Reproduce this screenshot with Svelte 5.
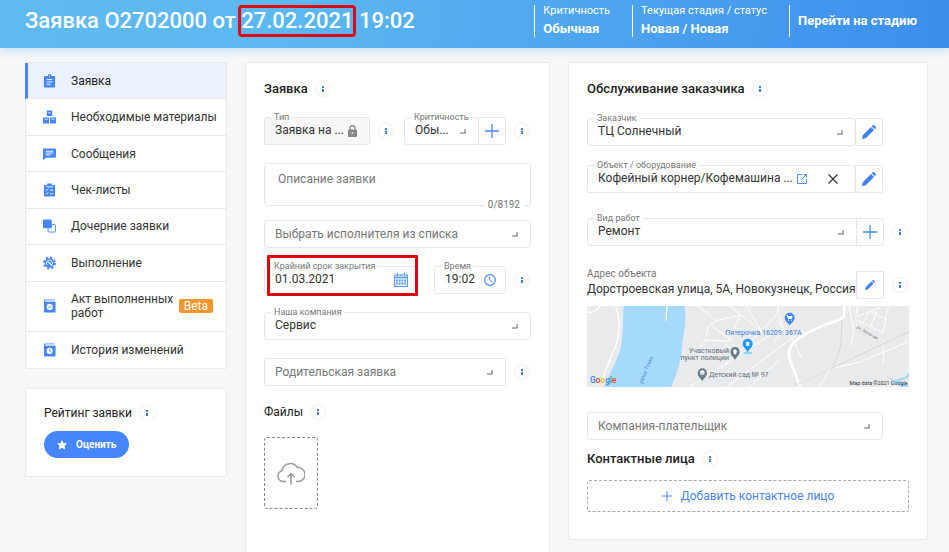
<script>
  const menu = [
    { icon: 'clipboard', text: 'Заявка', active: true },
    { icon: 'boxes', text: 'Необходимые материалы' },
    { icon: 'chat', text: 'Сообщения' },
    { icon: 'checklist', text: 'Чек-листы' },
    { icon: 'copies', text: 'Дочерние заявки' },
    { icon: 'gear', text: 'Выполнение' },
    { icon: 'act', text: 'Акт выполненных работ', badge: 'Beta' },
    { icon: 'history', text: 'История изменений' }
  ];
</script>

{#snippet menuIcon(name)}
  <svg class="menu-icon" viewBox="0 0 14 14" aria-hidden="true">
    {#if name === 'clipboard'}
      <path fill="#4686f7" d="M2 1.500h3a2 2 0 0 1 4 0h3a1 1 0 0 1 1 1V13a1 1 0 0 1-1 1H2a1 1 0 0 1-1-1V2.500a1 1 0 0 1 1-1z" />
      <path stroke="#fff" d="M4 5.500h6M4 8h6M4 10.500h4" />
      <circle cx="7" cy="1.800" r=".6" fill="#fff" />
    {:else if name === 'boxes'}
      <path fill="#4686f7" d="M4 0h6v6H4zM0 7.500h6.500V14H0zM7.500 7.500H14V14H7.500z" />
      <path stroke="#dbe7ff" d="M5.500 2.500h3M1.500 9.500h3.500M9 9.500h3.500" />
    {:else if name === 'chat'}
      <path fill="#4686f7" d="M1 1h12a1 1 0 0 1 1 1v8a1 1 0 0 1-1 1H3l-3 3V2a1 1 0 0 1 1-1z" />
      <path stroke="#fff" d="M3 4h8M3 6h8M3 8h5" />
    {:else if name === 'checklist'}
      <path fill="#4686f7" d="M2 1.500h2.500V0h5v1.500H12a1 1 0 0 1 1 1V13a1 1 0 0 1-1 1H2a1 1 0 0 1-1-1V2.500a1 1 0 0 1 1-1z" />
      <path stroke="#fff" fill="none" stroke-width=".9" d="M4 2.500v1.200h6V2.500M3 6.800l1 1 1.600-2M3 10.500l1 1 1.600-2M7.500 7.200H11M7.500 11H11" />
    {:else if name === 'copies'}
      <rect x="5.500" y="5.500" width="8" height="8" rx="1" fill="#fff" stroke="#4686f7" />
      <rect width="9.500" height="9.500" rx="1.500" fill="#4686f7" />
    {:else if name === 'gear'}
      <circle cx="7" cy="7" r="5.200" fill="#4686f7" />
      <circle cx="7" cy="7" r="6" fill="none" stroke="#4686f7" stroke-width="2" stroke-dasharray="2.400 2.312" />
      <path d="M4.700 9.300a3.200 3.200 0 1 1 4.600 0" fill="none" stroke="#fff" />
      <path d="M5.800 5.800l4 4" stroke="#fff" stroke-width="1.400" />
    {:else}
      <path fill="#4686f7" d="M2 0h10.500v1.200H2.400v.9H13a.6.600 0 0 1 .5.600V13a1 1 0 0 1-1 1H2a1 1 0 0 1-1-1V1a1 1 0 0 1 1-1z" />
      <path stroke="#fff" d="M2.500 1.600H12.500" stroke-width=".8" />
      <circle cx="7.200" cy="8" r="3.300" fill="#fff" />
      {#if name === 'act'}
        <path d="M5.500 8l1.300 1.300 2.200-2.500" fill="none" stroke="#4686f7" />
      {:else}
        <path d="M7.200 5.800V8l1.400 1.400" fill="none" stroke="#4686f7" />
      {/if}
    {/if}
  </svg>
{/snippet}

{#snippet info()}
  <button class="info" type="button" aria-label="Подсказка">
    <svg viewBox="0 0 14 14" aria-hidden="true">
      <path fill="#3f7fd0" d="M6 4h2v2H6zM6 7h2v3H6z" />
    </svg>
  </button>
{/snippet}

{#snippet corner()}
  <svg class="corner" viewBox="0 0 6 6" aria-hidden="true">
    <path d="M0 5h5.500M5 1v4" stroke="#666" fill="none" />
  </svg>
{/snippet}

{#snippet plus()}
  <svg class="plus" viewBox="0 0 14 14" aria-hidden="true">
    <path d="M7 0v14M0 7h14" stroke="#4a86f5" stroke-width="1.300" />
  </svg>
{/snippet}

{#snippet pencil()}
  <svg class="pencil" viewBox="0 0 14 14" aria-hidden="true">
    <path fill="#4080f5" d="M0 14l.8-3.800L9 2l3 3-8.200 8.200zM9.700 1.300l1-1a1 1 0 0 1 1.300 0L13.700 2a1 1 0 0 1 0 1.300l-1 1z" />
  </svg>
{/snippet}

<header>
  <h1>Заявка О2702000 от <span class="marked">27.02.2021</span> 19:02</h1>
  <div class="status">
    <div class="stat"><span>Критичность</span><strong>Обычная</strong></div>
    <div class="stat"><span>Текущая стадия / статус</span><strong>Новая / Новая</strong></div>
    <div class="stat"><a href="#stage">Перейти на стадию</a></div>
  </div>
</header>

<main>
  <aside>
    <nav class="card">
      {#each menu as item}
        <a href="#{item.icon}" class:active={item.active}>
          {@render menuIcon(item.icon)}
          <span class="menu-text">{item.text}</span>
          {#if item.badge}<span class="badge">{item.badge}</span>{/if}
        </a>
      {/each}
    </nav>
    <section class="card rating">
      <div class="heading">
        <h3>Рейтинг заявки</h3>
        {@render info()}
      </div>
      <button class="rate" type="button">
        <svg viewBox="0 0 10 10" aria-hidden="true">
          <path fill="#fff" stroke="#fff" stroke-linejoin="round" d="M5 .8l1.200 2.700 3 .3L7 5.800l.6 3L5 7.300 2.400 8.800l.6-3L.8 3.800l3-.3z" />
        </svg>
        Оценить
      </button>
    </section>
  </aside>

  <section class="card request">
    <div class="heading">
      <h2>Заявка</h2>
      {@render info()}
    </div>
    <div class="rows">
      <div class="row">
        <div class="field locked type">
          <label for="type">Тип</label>
          <input id="type" value="Заявка на ..." readonly />
          <svg class="lock" viewBox="0 0 9 12" aria-hidden="true">
            <path d="M2 5V3a2.500 2.500 0 0 1 5 0v2" fill="none" stroke="#888" stroke-width="1.300" />
            <rect y="4.500" width="9" height="7.500" rx="1" fill="#888" />
            <circle cx="4.500" cy="8" r="1" fill="#ddd" />
          </svg>
        </div>
        {@render info()}
        <div class="joined priority">
          <div class="field">
            <label for="priority">Критичность</label>
            <select id="priority"><option>Обы...</option></select>
            {@render corner()}
          </div>
          <button class="square" type="button" aria-label="Добавить критичность">{@render plus()}</button>
        </div>
        {@render info()}
      </div>

      <div class="field area">
        <textarea aria-label="Описание заявки" placeholder="Описание заявки"></textarea>
        <span class="counter">0/8192</span>
      </div>

      <div class="field">
        <select class="empty" aria-label="Исполнитель"><option>Выбрать исполнителя из списка</option></select>
        {@render corner()}
      </div>

      <div class="row dates">
        <div class="field">
          <label for="deadline">Крайний срок закрытия</label>
          <input id="deadline" value="01.03.2021" />
          <svg class="calendar" viewBox="0 0 14 14" aria-hidden="true">
            <rect x=".5" y="2" width="13" height="11.500" fill="#e3efff" stroke="#5b9cf0" />
            <path d="M.5 4.500h13" stroke="#5b9cf0" stroke-width="1.500" />
            <path d="M3.500 0v3.500M7 1v2M10.500 0v3.500" stroke="#5b9cf0" />
            <path d="M2 7.500h10M2 10.500h10" stroke="#5b9cf0" stroke-width="2" stroke-dasharray="1.750 1" />
          </svg>
          <span class="frame"></span>
        </div>
        <div class="field time">
          <label for="time">Время</label>
          <input id="time" value="19:02" />
          <svg class="clock" viewBox="0 0 12 12" aria-hidden="true">
            <circle cx="6" cy="6" r="5.300" fill="none" stroke="#4a90f0" stroke-width="1.200" />
            <path d="M5.500 2.500V6l3 2.500" fill="none" stroke="#4a90f0" />
          </svg>
        </div>
        {@render info()}
      </div>

      <div class="field">
        <label for="company">Наша компания</label>
        <select id="company"><option>Сервис</option></select>
        {@render corner()}
      </div>

      <div class="row">
        <div class="field">
          <select class="empty" aria-label="Родительская заявка"><option>Родительская заявка</option></select>
          {@render corner()}
        </div>
        {@render info()}
      </div>
    </div>

    <div class="heading files">
      <h3>Файлы</h3>
      {@render info()}
    </div>
    <button class="upload" type="button" aria-label="Загрузить файл">
      <svg viewBox="0 0 28 23" aria-hidden="true">
        <path d="M9 19.500H6.500A5.500 5.500 0 0 1 5 8.700 8.500 8.500 0 0 1 20.500 5.500 7 7 0 0 1 21.500 19.500H19M14 22.500V12M10.500 15L14 11.500 17.500 15" fill="none" stroke="#999" stroke-width="1.500" />
      </svg>
    </button>
  </section>

  <section class="card service">
    <div class="heading">
      <h2>Обслуживание заказчика</h2>
      {@render info()}
    </div>
    <div class="rows">
      <div class="row reserve">
        <div class="joined">
          <div class="field">
            <label for="customer">Заказчик</label>
            <select id="customer"><option>ТЦ Солнечный</option></select>
            {@render corner()}
          </div>
          <button class="square" type="button" aria-label="Изменить заказчика">{@render pencil()}</button>
        </div>
      </div>

      <div class="row reserve">
        <div class="joined">
          <div class="field object">
            <label for="object">Объект / оборудование</label>
            <input id="object" value="Кофейный корнер/Кофемашина ..." />
            <a href="#object" aria-label="Открыть объект">
              <svg viewBox="0 0 10 10" aria-hidden="true">
                <path d="M5 .5H.5v9h9V5M6.500 .5h3v3M9.500 .5L4 6" fill="none" stroke="#4a90f0" />
              </svg>
            </a>
            <button type="button" aria-label="Очистить">
              <svg viewBox="0 0 10 10" aria-hidden="true">
                <path d="M.5 .5l9 9M9.500 .5l-9 9" stroke="#333" stroke-width="1.200" />
              </svg>
            </button>
          </div>
          <button class="square" type="button" aria-label="Изменить объект">{@render pencil()}</button>
        </div>
      </div>

      <div class="row works">
        <div class="joined">
          <div class="field">
            <label for="work">Вид работ</label>
            <select id="work"><option>Ремонт</option></select>
            {@render corner()}
          </div>
          <button class="square" type="button" aria-label="Добавить вид работ">{@render plus()}</button>
        </div>
        {@render info()}
      </div>
    </div>

    <div class="row address">
      <div class="address-text">
        <small>Адрес объекта</small>
        <p>Дорстроевская улица, 5А, Новокузнецк, Россия</p>
      </div>
      <button class="square small" type="button" aria-label="Изменить адрес">{@render pencil()}</button>
      {@render info()}
    </div>

    <svg class="map" viewBox="22 18 966 243" preserveAspectRatio="xMidYMid slice" role="img" aria-label="Карта">
      <rect x="22" y="18" width="966" height="243" fill="#e9eaeb" />
      <path fill="#a6dafd" d="M132 18C128 70 132 120 118 160 105 200 90 215 74 261H275C290 225 302 190 307 140 309 105 322 75 315 18z" />
      <path fill="#a6dafd" d="M918 226l24 14 34-10 12-14v14l-26 14 26 14v3h-24l-22-14z" />
      <g fill="none" stroke="#fff">
        <path stroke-width="4" d="M262 18l-3 44M108 18c10 30 14 50 8 90-10 50-36 85-50 140M22 36c20 4 30-6 40-18" />
        <path stroke-width="3" d="M355 18l55 44 74-17-32-27M410 62l-25 18-8 40 68 4 38-80M400 80l60 44M484 45l62 48-110 104M500 18l46 75M546 93l46-50 6-25M380 120l-20 22M600 45l8 44-26 40M592 60l42 50 34 66M582 98L330 261M650 105L440 261M600 180l-90 81M436 130l44 50" />
        <path stroke-width="8" d="M794 18v28c-10 20-50 20-80 38-45 20-95 45-85 90l32 87" />
        <path stroke-width="3" d="M662 250l90-44 90-20 146-62M808 18l14 70-8 50M830 60l80 38 16-80M850 68l20-34M870 34l50 24M870 84l22-48M834 18l-6 34 70-28M910 140l2 54M720 261l30-54" />
      </g>
      <path fill="none" stroke="#c9cbcd" stroke-width="2" d="M650 255L988 95M786 60c0 50 0 80-14 112l-12 28" />
      <path fill="#4285f4" d="M630 77c-4-10-15-13-15-24a15 15 0 0 1 30 0c0 11-11 14-15 24z" />
      <path fill="#fff" d="M620 45h4l1 3h14l-3 9h-11l-3-10h-2zM625 59h3v3h-3zM633 59h3v3h-3z" />
      <ellipse cx="504" cy="159" rx="14" ry="4" fill="#8fd3f5" />
      <path fill="#2196f3" d="M504 157c-4-11-15-15-15-26a15 15 0 0 1 30 0c0 11-11 15-15 26z" />
      <rect x="499" y="125" width="10" height="13" rx="2" fill="#d7efff" />
      <path fill="#6b7f8a" d="M466 180c-4-10-14-13-14-25a14 14 0 0 1 28 0c0 12-10 15-14 25zM368 244c-4-10-14-13-14-25a14 14 0 0 1 28 0c0 12-10 15-14 25z" />
      <path fill="#fff" d="M460 153l6-6 6 6-3 10h-6z" />
      <circle cx="368" cy="218" r="7" fill="#fff" />
      <path d="M364 219q4 5 8 0" stroke="#6b7f8a" stroke-width="2" fill="none" />
      <g class="map-labels">
        <text x="437" y="104" fill="#3d7be0">Пятерочка 16209: 367А</text>
        <text x="448" y="158" text-anchor="end">Участковый</text>
        <text x="448" y="179" text-anchor="end">пункт полиции</text>
        <text x="388" y="232">Детский сад № 97</text>
        <text class="river" transform="translate(188 252) rotate(-68)">река Томь</text>
        <text class="street" transform="translate(830 84) rotate(30)">ул. Зеленая</text>
      </g>
      <text class="google" x="31" y="250"><tspan fill="#4285f4">G</tspan><tspan fill="#ea4335">o</tspan><tspan fill="#fbbc05">o</tspan><tspan fill="#4285f4">g</tspan><tspan fill="#34a853">l</tspan><tspan fill="#ea4335">e</tspan></text>
      <text class="copyright" x="984" y="255" text-anchor="end">Map data ©2021 Google</text>
    </svg>

    <div class="row payer reserve">
      <div class="field">
        <select class="empty" aria-label="Компания-плательщик"><option>Компания-плательщик</option></select>
        {@render corner()}
      </div>
    </div>

    <div class="heading contacts">
      <h2>Контактные лица</h2>
      {@render info()}
    </div>
    <button class="add" type="button">
      <svg viewBox="0 0 10 10" aria-hidden="true"><path d="M5 0v10M0 5h10" stroke="#4a86f5" /></svg>
      Добавить контактное лицо
    </button>
  </section>
</main>

<style>
  :global(body) {
    margin: 0;
    background: #f7f7f8;
    color: #333;
    font: 12px/14px Roboto, "Liberation Sans", sans-serif;
    overflow: hidden;
  }
  :global(*) { box-sizing: border-box; }
  h1, h2, h3, p { margin: 0; }
  button, input, select, textarea { font: inherit; color: inherit; }
  button { padding: 0; border: 0; background: none; cursor: pointer; }
  a { color: inherit; text-decoration: none; }
  svg { display: block; flex: none; }

  header {
    display: flex;
    align-items: center;
    justify-content: space-between;
    min-height: 48px;
    padding: 0 32px 6px 25px;
    color: #fff;
    background: linear-gradient(100deg, #5fbaf0 0%, #5cb8f0 30%, #3c8eed 100%);
    box-shadow: 0 2px 10px #b4dcf8;
  }
  h1 { font-size: 22px; line-height: 26px; font-weight: 500; }
  .marked { display: inline-block; outline: 3px solid #dd0c14; border-radius: 1px; }
  .status { display: flex; gap: 22px; }
  .stat {
    display: flex;
    flex-direction: column;
    justify-content: space-between;
    min-height: 32px;
    padding-left: 8px;
    border-left: 1px solid #fff;
  }
  .stat span { font-size: 11px; line-height: 12px; }
  .stat strong { font-size: 13px; line-height: 16px; font-weight: 700; }
  .stat a { margin: auto 0; font-size: 13px; font-weight: 700; }

  main {
    display: grid;
    grid-template-columns: 202px minmax(0, 305fr) minmax(0, 360fr);
    gap: 18px;
    align-items: start;
    padding: 14px 21px 0 25px;
  }
  .card {
    background: #fff;
    border: 1px solid #e9e9e9;
    border-radius: 2px;
  }
  aside { display: grid; gap: 19px; }
  nav {
    display: grid;
    grid-template-rows: repeat(6, 1fr) 50px 1fr;
    min-height: 307px;
  }
  nav a {
    display: flex;
    align-items: center;
    padding: 0 4px 0 17px;
    border-bottom: 1px solid #e9e9e9;
  }
  nav a:last-child { border-bottom: 0; }
  nav a.active {
    margin-left: -1px;
    padding-left: 15px;
    border-left: 3px solid #4686f7;
    background: #ebf1ff;
    color: #222;
  }
  .menu-icon { width: 13px; height: 14px; margin-right: 15px; }
  .menu-text { flex: 1; }
  .badge {
    margin-right: 9px;
    padding: 0 5px;
    border-radius: 2px;
    background: #f7962d;
    color: #fff;
  }

  .heading { display: flex; align-items: center; gap: 8px; }
  h2, h3 { font-size: 13px; line-height: 16px; font-weight: 500; color: #222; }
  h3 { font-size: 12px; font-weight: 400; }
  .info {
    display: block;
    flex: none;
    width: 14px;
    height: 14px;
    border-radius: 50%;
    box-shadow: 0 0 0 1px #edf1f6;
  }
  .rating { padding: 16px 18px 18px; }
  .rate {
    display: flex;
    align-items: center;
    gap: 9px;
    margin-top: 10px;
    padding: 0 13px;
    height: 27px;
    border-radius: 14px;
    background: #4686ff;
    color: #fff;
    font-size: 10px;
    font-weight: 700;
  }
  .rate svg { width: 10px; height: 10px; }

  .request, .service { padding: 18px; }
  .request { min-height: 500px; }
  .rows { display: grid; gap: 18px; margin-top: 20px; }
  .service .rows { gap: 19px; margin-top: 21px; }
  .row { display: flex; align-items: center; gap: 9px; padding-right: 2px; }
  .row.reserve { padding-right: 26px; }
  .joined { display: flex; flex: 1; min-width: 0; }
  .priority { margin-left: 2px; }
  .field {
    position: relative;
    display: flex;
    flex: 1;
    align-items: center;
    min-width: 0;
    min-height: 28px;
    padding: 0 12px 0 10px;
    border: 1px solid #e6e6e6;
    border-radius: 3px;
  }
  .field label {
    position: absolute;
    top: -7px;
    left: 6px;
    padding: 0 3px;
    background: #fff;
    color: #777;
    font-size: 9px;
    line-height: 12px;
    white-space: nowrap;
  }
  .field input, .field select, .field textarea {
    flex: 1;
    width: 0;
    min-width: 0;
    padding: 0;
    border: 0;
    outline: 0;
    background: none;
    appearance: none;
    resize: none;
  }
  .field label + input, .field label + select { padding-bottom: 2px; }
  .field select.empty, .field textarea::placeholder { color: #777; }
  .locked { background: #f7f7f7; }
  .locked label { background: linear-gradient(#fff 50%, #f7f7f7 50%); }
  .type { flex: 0 1 106px; }
  .corner { width: 6px; height: 6px; }
  .lock { width: 9px; height: 12px; }
  .calendar { width: 14px; height: 14px; }
  .clock { width: 12px; height: 12px; }
  .dates .field { padding-right: 9px; }
  .time { flex: 0 0 72px; }
  .dates .time { margin-left: 7px; }
  .frame {
    position: absolute;
    inset: -12px -1px -3px 2px;
    border: 3px solid #e00610;
    border-radius: 1px;
    pointer-events: none;
  }
  .area { margin-bottom: -4px; padding: 8px 13px; }
  .counter {
    position: absolute;
    right: 6px;
    bottom: -6px;
    padding: 0 4px;
    background: #fff;
    color: #777;
    font-size: 10px;
    line-height: 12px;
  }
  .area textarea { height: 25px; }
  .square {
    display: grid;
    flex: none;
    place-items: center;
    width: 28px;
    height: 28px;
    margin-left: -1px;
    border: 1px solid #e6e6e6;
    border-radius: 2px;
  }
  .plus, .pencil { width: 14px; height: 14px; }
  .small .pencil { width: 10px; height: 10px; }
  .files { margin-top: 18px; }
  .upload {
    display: grid;
    place-items: center;
    width: 54px;
    height: 72px;
    margin-top: 17px;
    border: 1px dashed #888;
    border-radius: 3px;
  }
  .upload svg { width: 28px; height: 23px; }

  .object { padding-right: 17px; }
  .object a { margin-right: 21px; }
  .object a svg, .object button svg { width: 10px; height: 10px; }
  .works { margin-top: 6px; }
  .address { margin-top: 22px; }
  .address-text { flex: 1; min-width: 0; padding-bottom: 6px; }
  .address small { display: block; color: #777; font-size: 10px; line-height: 12px; }
  .address p { margin-top: 2px; line-height: 14px; white-space: nowrap; }
  .map { width: 100%; height: auto; margin-top: 4px; }
  .map-labels { fill: #5f6f7a; font-size: 21px; }
  .map-labels .river { fill: #5b93c8; font-size: 18px; }
  .map-labels .street { fill: #777; font-size: 13px; }
  .google { font-size: 25px; font-weight: 500; }
  .copyright { fill: #333; font-size: 16px; }
  .payer { margin-top: 25px; }
  .contacts { margin-top: 11px; }
  .add {
    display: flex;
    align-items: center;
    justify-content: center;
    gap: 9px;
    width: 100%;
    height: 32px;
    margin: 13px 0 9px;
    border: 1px dashed #aaa;
    border-radius: 2px;
    color: #4a86f5;
  }
  .add svg { width: 10px; height: 10px; }
</style>
